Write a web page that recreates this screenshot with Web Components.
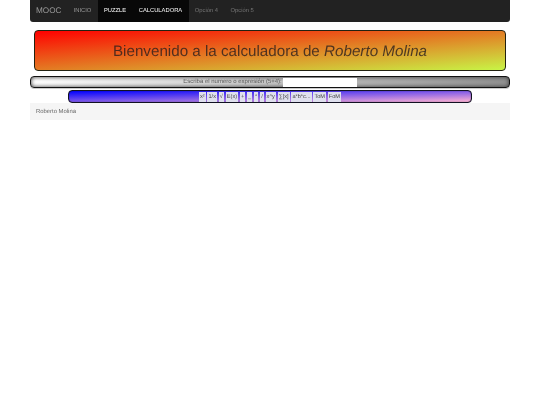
<!DOCTYPE html>
<html>
<head>
<meta charset="utf-8">
<title>MOOC</title>
<style>
  body { margin: 0; background: #fff; font-family: "Liberation Sans", Arial, sans-serif; text-rendering: geometricPrecision; }
</style>
</head>
<body>
<mooc-page>
  <mooc-nav></mooc-nav>
  <mooc-hero>Bienvenido a la calculadora de <em>Roberto Molina</em></mooc-hero>
  <mooc-input label="Escriba el numero o expresión (5+4):"></mooc-input>
  <mooc-keys keys="x²,1/x,√,E(x),+,_,*,/,x^y,∑[x],a*b*c...,ToM,FoM"></mooc-keys>
  <mooc-footer>Roberto Molina</mooc-footer>
</mooc-page>

<script>
class MoocPage extends HTMLElement {
  constructor() {
    super();
    this.attachShadow({ mode: "open" }).innerHTML = `
      <style>
        :host { display: block; width: 480px; margin: 0 auto; will-change: transform; }
      </style>
      <slot></slot>`;
  }
}

class MoocNav extends HTMLElement {
  constructor() {
    super();
    this.attachShadow({ mode: "open" }).innerHTML = `
      <style>
        :host { display: flex; height: 22px; margin-bottom: 8px; background: #222; border-radius: 0 0 3px 3px; font-size: 5.8px; text-transform: uppercase; }
        .brand { padding: 0 5.8px 0 6px; font-size: 8.2px; line-height: 21px; color: #999; text-transform: none; }
        a { padding: 0 6.3px; line-height: 22px; color: #999; }
        a.active { background: #080808; color: #fff; }
        a.opt { text-transform: none; color: #777; }
      </style>
      <span class="brand">MOOC</span>
      <a>Inicio</a>
      <a class="active">Puzzle</a>
      <a class="active">Calculadora</a>
      <a class="opt">Opción 4</a>
      <a class="opt">Opción 5</a>`;
  }
}

class MoocHero extends HTMLElement {
  constructor() {
    super();
    this.attachShadow({ mode: "open" }).innerHTML = `
      <style>
        :host { display: block; box-sizing: border-box; height: 41px; margin: 0 4px 5px; border: 1.5px solid #221; border-radius: 4px; background: linear-gradient(to bottom right, #ff0000, #c8f546); color: rgba(40, 30, 30, .8); font-size: 15.2px; line-height: 41px; text-align: center; }
      </style>
      <slot></slot>`;
  }
}

class MoocInput extends HTMLElement {
  constructor() {
    super();
    this.attachShadow({ mode: "open" }).innerHTML = `
      <style>
        :host { display: flex; justify-content: center; align-items: center; box-sizing: border-box; height: 12px; margin-bottom: 2px; border: 1.5px solid #111; border-radius: 4px; background: linear-gradient(to right, #fff 0%, #909090 100%); color: #555; font-size: 6px; box-shadow: inset 0 0 4px #333, 0 1px 0 #ccc; }
        .box { width: 74px; height: 9px; margin-left: 1px; background: #fff; }
      </style>
      <span id="label"></span><div class="box"></div>`;
    this.shadowRoot.getElementById("label").textContent = this.getAttribute("label");
  }
}

class MoocKeys extends HTMLElement {
  constructor() {
    super();
    const keys = this.getAttribute("keys").split(",");
    this.attachShadow({ mode: "open" }).innerHTML = `
      <style>
        :host { display: flex; justify-content: center; align-items: center; gap: 1.7px; box-sizing: border-box; height: 13px; margin: 0 38px; border: 1.5px solid #112; border-radius: 4px; background: linear-gradient(to bottom right, #0000ff, #ffb4d2); box-shadow: inset 0 0 1px #113; }
        span { display: block; height: 10px; padding: 0 1.1px; background: #dfe0ee; color: #444; font-size: 5.6px; line-height: 10px; }
      </style>
      ${keys.map(k => `<span>${k}</span>`).join("")}`;
  }
}

class MoocFooter extends HTMLElement {
  constructor() {
    super();
    this.attachShadow({ mode: "open" }).innerHTML = `
      <style>
        :host { display: block; box-sizing: border-box; height: 17px; padding: 2px 0 0 6px; background: #f5f5f5; color: #666; font-size: 5.9px; line-height: 15px; }
      </style>
      <slot></slot>`;
  }
}

customElements.define("mooc-page", MoocPage);
customElements.define("mooc-nav", MoocNav);
customElements.define("mooc-hero", MoocHero);
customElements.define("mooc-input", MoocInput);
customElements.define("mooc-keys", MoocKeys);
customElements.define("mooc-footer", MoocFooter);
</script>
</body>
</html>
